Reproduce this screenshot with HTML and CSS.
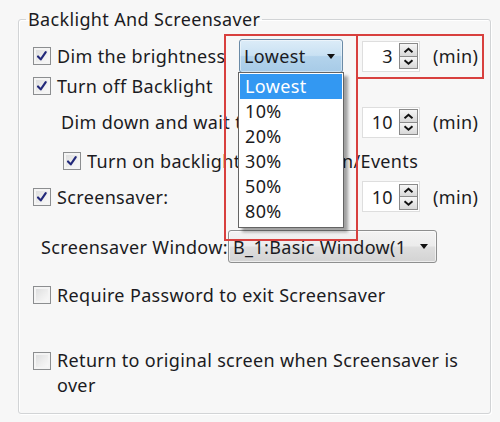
FILE: index.html
```html
<!DOCTYPE html>
<html>
<head>
<meta charset="utf-8">
<link rel="stylesheet" href="styles.css">
</head>
<body>
<div class="page">
  <fieldset class="group">
    <legend>Backlight And Screensaver</legend>

    <div class="row r1">
      <span class="cb on"><svg viewBox="0 0 18 18"><path d="M4.5 9.5 L7.6 12.8 L13.2 4.6"/></svg></span>
      <span class="lbl">Dim the brightness</span>
      <div class="combo open">
        <span class="combo-text">Lowest</span><span class="arrow"></span>
        <ul class="droplist">
          <li class="sel">Lowest</li>
          <li>10%</li>
          <li>20%</li>
          <li>30%</li>
          <li>50%</li>
          <li>80%</li>
        </ul>
      </div>
      <div class="spin">
        <div class="spinbox"><span class="spinval">3</span><span class="spinbtns"><span class="sb"><svg viewBox="0 0 17 11"><path d="M4 8 L8.5 4 L13 8"/></svg></span><span class="sb"><svg viewBox="0 0 17 11"><path d="M4 3.5 L8.5 7.5 L13 3.5"/></svg></span></span></div>
        <span class="unit">(min)</span>
      </div>
    </div>

    <div class="row r2">
      <span class="cb on"><svg viewBox="0 0 18 18"><path d="M4.5 9.5 L7.6 12.8 L13.2 4.6"/></svg></span>
      <span class="lbl">Turn off Backlight</span>
    </div>

    <div class="row r3">
      <span class="lbl clip clip3">Dim down and wait time:</span>
      <div class="spin">
        <div class="spinbox"><span class="spinval">10</span><span class="spinbtns"><span class="sb"><svg viewBox="0 0 17 11"><path d="M4 8 L8.5 4 L13 8"/></svg></span><span class="sb"><svg viewBox="0 0 17 11"><path d="M4 3.5 L8.5 7.5 L13 3.5"/></svg></span></span></div>
        <span class="unit">(min)</span>
      </div>
    </div>

    <div class="row r4">
      <span class="cb on"><svg viewBox="0 0 18 18"><path d="M4.5 9.5 L7.6 12.8 L13.2 4.6"/></svg></span>
      <span class="lbl clip clip4">Turn on backlight when Actio</span><span class="lbl tail">n/Events</span>
    </div>

    <div class="row r5">
      <span class="cb on"><svg viewBox="0 0 18 18"><path d="M4.5 9.5 L7.6 12.8 L13.2 4.6"/></svg></span>
      <span class="lbl">Screensaver:</span>
      <div class="spin">
        <div class="spinbox"><span class="spinval">10</span><span class="spinbtns"><span class="sb"><svg viewBox="0 0 17 11"><path d="M4 8 L8.5 4 L13 8"/></svg></span><span class="sb"><svg viewBox="0 0 17 11"><path d="M4 3.5 L8.5 7.5 L13 3.5"/></svg></span></span></div>
        <span class="unit">(min)</span>
      </div>
    </div>

    <div class="row r6">
      <span class="lbl lbl-win">Screensaver Window:</span>
      <div class="combo combo-win">
        <span class="combo-text">B_1:Basic Window(1</span><span class="arrow"></span>
      </div>
    </div>

    <div class="row r7">
      <span class="cb"></span>
      <span class="lbl">Require Password to exit Screensaver</span>
    </div>

    <div class="row r8">
      <span class="cb"></span>
      <span class="lbl">Return to original screen when Screensaver is over</span>
    </div>
  </fieldset>

  <div class="mark m1"></div>
  <div class="mark m2"></div>
</div>
</body>
</html>
```

FILE: styles.css
```css
* { box-sizing: border-box; }

body {
  margin: 0;
  background: #f7f7f7;
  font-family: "Noto Sans", "Open Sans", sans-serif;
  font-size: 18px;
  letter-spacing: 0.35px;
  color: #1b1b22;
}

.page {
  position: relative;
  width: 500px;
  height: 422px;
  overflow: hidden;
  display: flow-root;
}

.group {
  margin: 9px 9px 0 18px;
  padding: 0 10px 0 0;
  height: 405px;
  border: 1px solid #d2d4d6;
  border-radius: 3px;
  box-shadow: inset 1px 1px 0 #ffffff, 1px 1px 0 #ffffff;
  min-width: 0;
}

.group legend {
  margin-left: 7px;
  padding: 0 2px;
  line-height: 20px;
}

.row {
  display: flex;
  align-items: center;
}

.lbl {
  line-height: 24px;
  white-space: nowrap;
}

.clip {
  display: block;
  overflow: hidden;
  flex: none;
}
.clip3 { width: 177px; }
.clip4 { width: 151px; }
.tail { margin-left: 104px; }

.r1 { height: 36px; margin-top: 9px; padding-left: 14px; }
.r2 { height: 24px; padding-left: 14px; }
.r3 { height: 30px; margin-top: 9px; padding-left: 42px; }
.r4 { height: 24px; margin-top: 12px; padding-left: 44px; }
.r5 { height: 31px; margin-top: 8px; padding-left: 14px; }
.r6 { height: 33px; margin-top: 18px; padding-left: 22px; }
.r7 { height: 24px; margin-top: 20px; padding-left: 14px; }
.r8 { margin-top: 41px; padding-left: 14px; align-items: flex-start; }

.r8 .lbl {
  white-space: normal;
  line-height: 25px;
  max-width: 415px;
}
.r8 .cb { margin-top: 4px; }

/* checkbox */
.cb {
  flex: none;
  width: 18px;
  height: 18px;
  margin-right: 6px;
  border: 1px solid #8c8e90;
  background: linear-gradient(135deg, #d9dadb 0%, #eeeeee 55%, #fbfbfb 100%);
  box-shadow: inset 0 0 0 2px #f4f4f4;
  display: flex;
  align-items: center;
  justify-content: center;
}
.cb svg { width: 16px; height: 16px; }
.cb svg path {
  fill: none;
  stroke: #22297a;
  stroke-width: 2.4;
  stroke-linecap: round;
  stroke-linejoin: round;
}

/* combo boxes */
.combo {
  position: relative;
  flex: none;
  height: 34px;
  border: 1px solid #6a8aa6;
  border-radius: 3px;
  display: flex;
  align-items: center;
  padding-left: 4px;
  padding-right: 7px;
}
.combo.open {
  width: 104px;
  margin-left: auto;
  background: linear-gradient(#dcecf8 0%, #c9e1f3 48%, #b3d3ec 52%, #a7cbe7 100%);
  box-shadow: inset 0 0 0 1px rgba(255,255,255,0.45);
}
.combo-text {
  flex: 1;
  white-space: nowrap;
  overflow: hidden;
  line-height: 24px;
}
.arrow {
  flex: none;
  width: 0;
  height: 0;
  border-left: 4.5px solid transparent;
  border-right: 4.5px solid transparent;
  border-top: 5px solid #111;
  margin-left: 4px;
}

.combo-win {
  width: 209px;
  height: 33px;
  border-color: #8e8f8f;
  background: linear-gradient(#f3f3f3 0%, #ececec 48%, #dedede 52%, #d3d3d3 100%);
  box-shadow: inset 0 0 0 1px rgba(255,255,255,0.6);
  padding-left: 4px;
  padding-right: 8px;
}
.lbl-win { width: 187px; flex: none; }

/* dropdown list */
.droplist {
  position: absolute;
  left: -2px;
  top: 32px;
  width: 106px;
  margin: 0;
  padding: 1px 0 3px;
  list-style: none;
  background: #ffffff;
  border: 1px solid #646464;
  box-shadow: 4px 4px 3px rgba(0,0,0,0.35);
  z-index: 5;
}
.droplist li {
  height: 25px;
  line-height: 25px;
  padding-left: 5px;
  margin: 0 1px;
}
.droplist li.sel {
  background: #3398f2;
  color: #ffffff;
}

/* spin boxes */
.spin {
  flex: none;
  width: 118px;
  margin-left: auto;
  display: flex;
  align-items: center;
}
.r1 .spin { margin-left: 19px; }
.spinbox {
  width: 58px;
  height: 31px;
  background: #ffffff;
  border: 1px solid #dedede;
  display: flex;
  align-items: center;
}
.spinval {
  flex: 1;
  text-align: right;
  padding-right: 6px;
  line-height: 24px;
}
.spinbtns {
  width: 19px;
  height: 26px;
  margin-right: 1px;
  display: flex;
  flex-direction: column;
}
.sb {
  flex: 1;
  border: 1px solid #8a8a8a;
  background: linear-gradient(#f6f6f6, #d8d8d8);
  display: flex;
  align-items: center;
  justify-content: center;
}
.sb + .sb { border-top: none; }
.sb svg { width: 15px; height: 10px; }
.sb svg path {
  fill: none;
  stroke: #111;
  stroke-width: 2.2;
  stroke-linejoin: miter;
}
.unit {
  margin-left: 13px;
  line-height: 24px;
  white-space: nowrap;
}

/* red annotation boxes */
.mark {
  position: absolute;
  border: 2px solid #d8403e;
  z-index: 10;
}
.m1 { left: 224px; top: 34px; width: 134px; height: 207px; }
.m2 { left: 356px; top: 34px; width: 128px; height: 45px; }
```
